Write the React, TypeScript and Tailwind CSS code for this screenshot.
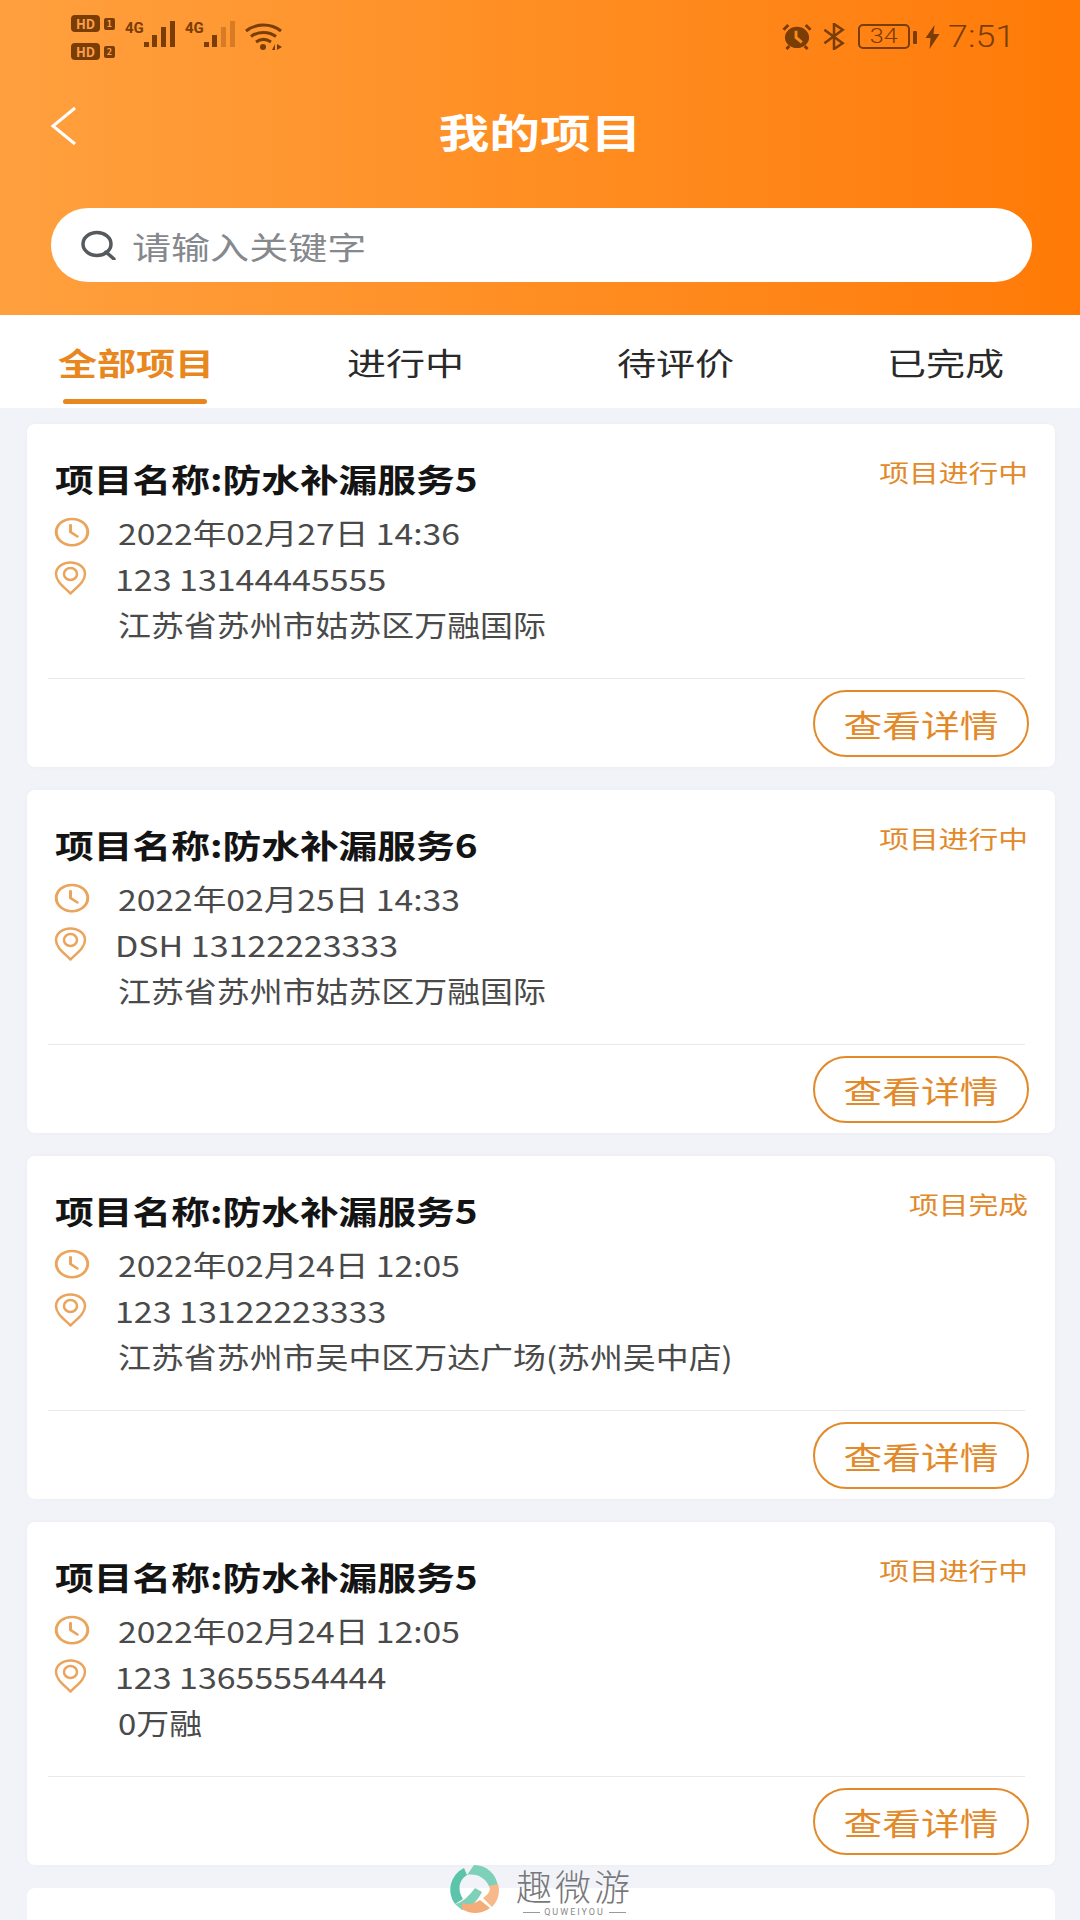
import React from 'react';

const PROJECTS = [
  { name: '项目名称:防水补漏服务5', status: '项目进行中', time: '2022年02月27日 14:36', contact: '123 13144445555', address: '江苏省苏州市姑苏区万融国际' },
  { name: '项目名称:防水补漏服务6', status: '项目进行中', time: '2022年02月25日 14:33', contact: 'DSH 13122223333', address: '江苏省苏州市姑苏区万融国际' },
  { name: '项目名称:防水补漏服务5', status: '项目完成', time: '2022年02月24日 12:05', contact: '123 13122223333', address: '江苏省苏州市吴中区万达广场(苏州吴中店)' },
  { name: '项目名称:防水补漏服务5', status: '项目进行中', time: '2022年02月24日 12:05', contact: '123 13655554444', address: '0万融' },
];

const TABS = ['全部项目', '进行中', '待评价', '已完成'];

function ClockIcon() {
  return (
    <svg viewBox="0 0 24 24" preserveAspectRatio="none" fill="none" stroke="#eaa45c" strokeWidth="2" strokeLinecap="round" strokeLinejoin="round" className="w-[36px] h-[30px] shrink-0">
      <circle cx="12" cy="12" r="10.5" />
      <path d="M11 6.5v5.5l4.5 3.5" />
    </svg>
  );
}

function PinIcon() {
  return (
    <svg viewBox="0 0 33 34" fill="none" stroke="#eaa45c" strokeWidth="2.5" strokeLinejoin="round" className="w-[33px] h-[34px] shrink-0">
      <path d="M16.5 32.5C10 26 2 20.500 2 13 C2 6.500 8.500 1.500 16.500 1.500 C24.500 1.500 31 6.500 31 13 C31 20.500 23 26 16.500 32.500Z" />
      <ellipse cx="16.500" cy="13" rx="6.500" ry="6" />
    </svg>
  );
}

function SimSignal({ dim }: { dim: boolean }) {
  return (
    <div className="ml-[8px] flex items-start">
      <span className="mt-[5px] w-[19px] text-[15px] leading-[17px] font-bold font-['Roboto',sans-serif]">4G</span>
      <svg viewBox="0 0 33 27" fill="currentColor" className="mt-[6px] w-[33px] h-[27px]">
        <rect x="0" y="21" width="5" height="5" />
        <rect x="8" y="14" width="5" height="12" />
        <rect x="17" y="6" width="5" height="20" opacity={dim ? 0.3 : 1} />
        <rect x="26" y="0" width="5" height="26" opacity={dim ? 0.3 : 1} />
      </svg>
    </div>
  );
}

function StatusBar() {
  return (
    <div className="h-[78px] pt-[15px] pl-[71px] pr-[70px] flex justify-between text-[#7a3d06]">
      <div className="flex">
        <div className="flex flex-col gap-[11px] w-[46px]">
          {['1', '2'].map((n) => (
            <div key={n} className="flex items-center gap-[4px]">
              <span className="w-[29px] h-[17px] rounded-[4px] bg-[#7a3d06] text-[#f9a04a] text-[13px] leading-[17px] font-bold text-center">HD</span>
              <span className="w-[11px] h-[12px] rounded-[2px] bg-[#7a3d06] text-[#f9a04a] text-[9px] leading-[12px] font-bold text-center">{n}</span>
            </div>
          ))}
        </div>
        <SimSignal dim={false} />
        <SimSignal dim />
        <svg viewBox="0 0 40 28" fill="none" stroke="currentColor" className="ml-[7px] mt-[8px] w-[40px] h-[28px]">
          <path d="M2 8C12 0 27 0 37 8" strokeWidth="3" />
          <path d="M7 13.500C14 8 25 8 32 13.500" strokeWidth="3" />
          <path d="M12 19C17 15.500 22 15.500 27 19" strokeWidth="3" />
          <circle cx="19" cy="24" r="3" fill="currentColor" stroke="none" />
          <path d="M28 27l3-6v6zM33 21l5 3-5 3z" fill="currentColor" stroke="none" />
        </svg>
      </div>
      <div className="flex items-start">
        <svg viewBox="0 0 32 28" className="mt-[8px] w-[32px] h-[27px]">
          <ellipse cx="16" cy="15" rx="12.500" ry="11" fill="currentColor" />
          <path d="M2 7l5-5M30 7l-5-5" stroke="currentColor" strokeWidth="3" />
          <path d="M5 27l3-3M27 27l-3-3" stroke="currentColor" strokeWidth="3" />
          <path d="M15 8v7l6 5" fill="none" stroke="#fb8a1e" strokeWidth="3" />
        </svg>
        <svg viewBox="0 0 24 28" fill="none" stroke="currentColor" strokeWidth="2.600" className="ml-[9px] mt-[8px] w-[24px] h-[27px]">
          <path d="M2 7l19 14-9 6V1l9 6L2 21" />
        </svg>
        <div className="ml-[12px] mt-[9px] w-[52px] h-[25px] rounded-[5px] border-[2px] border-[#7a3d06] flex items-center justify-center">
          <span className="text-[21px] leading-none font-light scale-x-[1.2] font-['Roboto',sans-serif]">34</span>
        </div>
        <div className="ml-[3px] mt-[16px] w-[4px] h-[13px] rounded-[1px] bg-[#7a3d06]" />
        <svg viewBox="0 0 14 24" className="ml-[8px] mt-[10px] w-[15px] h-[24px]">
          <path d="M9 0L0 13h5l-1 11 10-15H8z" fill="currentColor" />
        </svg>
        <span className="ml-[8px] mt-[1px] w-[62px] text-[32px] leading-[40px] font-light inline-block origin-left scale-x-[1.12] font-['Roboto',sans-serif]">7:51</span>
      </div>
    </div>
  );
}

function ProjectCard({ project }: { project: (typeof PROJECTS)[number] }) {
  return (
    <div className="h-[343px] bg-white rounded-[8px] pt-[35px] pb-[10px] flex flex-col shadow-[0_0_4px_rgba(0,0,0,0.03)]">
      <div className="pl-[28px] pr-[27px] flex items-start justify-between">
        <span className="text-[32px] leading-[38px] font-bold text-[#141414] whitespace-nowrap inline-block origin-left scale-x-[1.21]">{project.name}</span>
        <span className="-mt-[1px] text-[24px] leading-[28px] text-[#e2892a] whitespace-nowrap inline-block origin-right scale-x-[1.24]">{project.status}</span>
      </div>
      <div className="mt-[12px] pl-[27px] h-[46px] flex items-center">
        <ClockIcon />
        <span className="ml-[28px] text-[29px] leading-[46px] text-[#4a4a4a] whitespace-nowrap inline-block origin-left scale-x-[1.16]">{project.time}</span>
      </div>
      <div className="pl-[27px] h-[46px] flex items-center">
        <PinIcon />
        <span className="ml-[28px] text-[29px] leading-[46px] text-[#4a4a4a] whitespace-nowrap inline-block origin-left scale-x-[1.17]">{project.contact}</span>
      </div>
      <div className="pl-[91px] h-[46px]">
        <span className="text-[29px] leading-[46px] text-[#4a4a4a] whitespace-nowrap inline-block origin-left scale-x-[1.135]">{project.address}</span>
      </div>
      <div className="mt-[31px] ml-[21px] mr-[30px] h-[2px] bg-[#e9e9e9]" />
      <div className="mt-[11px] pr-[26px] flex justify-end">
        <div className="w-[216px] h-[67px] rounded-full border-[2.5px] border-[#e2892a] flex items-center justify-center">
          <span className="text-[31px] leading-none text-[#e2892a] whitespace-nowrap inline-block scale-x-[1.25]">查看详情</span>
        </div>
      </div>
    </div>
  );
}

export default function App() {
  return (
    <div className="relative w-[1080px] h-[1920px] overflow-hidden bg-[#f2f3f8] font-['Noto_Sans_CJK_SC','Noto_Sans',sans-serif]">
      {/* 顶部 */}
      <div className="h-[315px] bg-gradient-to-r from-[#ffa03e] via-[#ff8e22] to-[#ff7a05]">
        <StatusBar />
        <div className="h-[106px] pl-[50px] pr-[51px] grid grid-cols-[60px_1fr_60px] items-center">
          <svg viewBox="0 0 28 40" fill="none" stroke="#fff" strokeWidth="3" className="w-[28px] h-[40px] -mt-[10px]">
            <path d="M25 2L3 20l22 18" />
          </svg>
          <div className="text-center">
            <span className="text-[40px] leading-[50px] font-bold text-white inline-block scale-x-[1.27]">我的项目</span>
          </div>
          <div />
        </div>
        <div className="mt-[24px] ml-[51px] mr-[48px] h-[74px] rounded-full bg-white flex items-center pl-[29px]">
          <svg viewBox="0 0 36 30" fill="none" stroke="#555a5e" strokeWidth="3.500" className="w-[36px] h-[30px]">
            <ellipse cx="17" cy="14" rx="14" ry="11.500" />
            <path d="M26 22l8 7" strokeLinecap="round" />
          </svg>
          <span className="ml-[16px] text-[31px] leading-none text-[#85888c] whitespace-nowrap inline-block origin-left scale-x-[1.26]">请输入关键字</span>
        </div>
      </div>

      {/* 标签 */}
      <div className="h-[93px] pl-[1px] bg-white grid grid-cols-4">
        {TABS.map((tab, i) => (
          <div key={tab} className="relative flex justify-center pt-[24px]">
            <span className={`text-[31px] leading-[46px] whitespace-nowrap inline-block scale-x-[1.26] ${i === 0 ? 'font-bold text-[#e8871e]' : 'text-[#2a2a2a]'}`}>{tab}</span>
            {i === 0 && <div className="absolute left-[62px] bottom-[4px] w-[144px] h-[5px] rounded-full bg-[#e8871e]" />}
          </div>
        ))}
      </div>

      {/* 项目列表 */}
      <div className="pt-[16px] pl-[27px] pr-[25px] flex flex-col gap-[23px]">
        {PROJECTS.map((project, i) => (
          <ProjectCard key={i} project={project} />
        ))}
        <div className="h-[343px] bg-white rounded-[8px]" />
      </div>

      {/* 水印 */}
      <div className="absolute left-[447px] top-[1862px] flex items-start">
        <svg viewBox="0 0 54 54" fill="none" className="w-[54px] h-[54px]">
          <path d="M27 3A24 24 0 0 1 51 25L42 24C38 16 30 11 20 13Z" fill="#7fd0b8" />
          <path d="M17 6A24 24 0 0 0 8 42L16 37C10 28 12 18 20 13Z" fill="#5cc4a8" />
          <path d="M8 42C15 41 22 34 28 26L35 30C30 40 22 47 15 48Z" fill="#7fd0b8" />
          <path d="M51 22A24 24 0 0 1 45 45L36 36C42 32 44 28 42 24Z" fill="#f7b98a" />
          <path d="M15 47A24 24 0 0 0 43 46L33 38C27 42 21 43 15 41Z" fill="#f4ad78" />
        </svg>
        <div className="ml-[15px] mt-[4px] flex flex-col items-center">
          <span className="text-[36px] leading-[38px] text-[#77787a] font-light tracking-[3px] whitespace-nowrap">趣微游</span>
          <div className="mt-[3px] flex items-center gap-[4px]">
            <div className="w-[17px] h-[1px] bg-[#9a9a9a]" />
            <span className="text-[9px] leading-[10px] tracking-[2px] text-[#8a8a8a] font-['Roboto',sans-serif]">QUWEIYOU</span>
            <div className="w-[17px] h-[1px] bg-[#9a9a9a]" />
          </div>
        </div>
      </div>
    </div>
  );
}
